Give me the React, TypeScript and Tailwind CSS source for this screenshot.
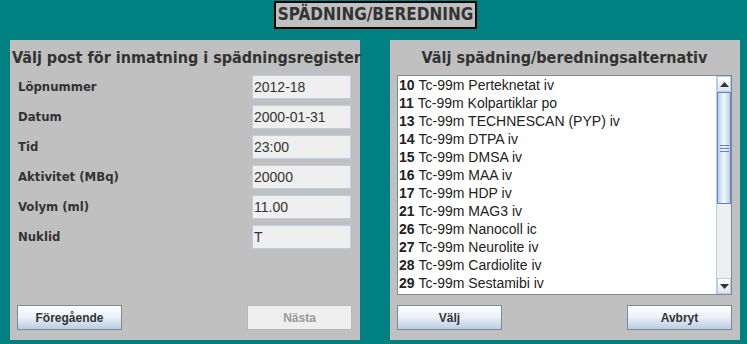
import React from "react";

const fields = [
  { label: "Löpnummer", value: "2012-18" },
  { label: "Datum", value: "2000-01-31" },
  { label: "Tid", value: "23:00" },
  { label: "Aktivitet (MBq)", value: "20000" },
  { label: "Volym (ml)", value: "11.00" },
  { label: "Nuklid", value: "T" },
];

const items = [
  ["10", "Tc-99m Perteknetat iv"],
  ["11", "Tc-99m Kolpartiklar po"],
  ["13", "Tc-99m TECHNESCAN (PYP) iv"],
  ["14", "Tc-99m DTPA iv"],
  ["15", "Tc-99m DMSA iv"],
  ["16", "Tc-99m MAA iv"],
  ["17", "Tc-99m HDP iv"],
  ["21", "Tc-99m MAG3 iv"],
  ["26", "Tc-99m Nanocoll ic"],
  ["27", "Tc-99m Neurolite iv"],
  ["28", "Tc-99m Cardiolite iv"],
  ["29", "Tc-99m Sestamibi iv"],
];

const boldFont = "font-['DejaVu_Sans_Condensed','DejaVu_Sans',Verdana,sans-serif] font-bold";
const plainFont = "font-['Liberation_Sans',Arial,sans-serif]";

const MetalButton = ({ children, disabled }: { children: React.ReactNode; disabled?: boolean }) => (
  <button
    disabled={disabled}
    className={`w-[105px] h-[25px] border text-[12px] font-bold ${plainFont} ${
      disabled
        ? "bg-[#eeeeee] border-[#b8b8b8] text-[#999999]"
        : "bg-gradient-to-b from-white via-[#e9f0f8] to-[#b9cde3] border-[#7a8a99] text-[#333333]"
    }`}
  >
    {children}
  </button>
);

const Arrow = ({ up }: { up?: boolean }) => (
  <div className="h-[16px] flex items-center justify-center bg-gradient-to-b from-white to-[#dde5ee] border border-[#b8cfe5]">
    <svg width="9" height="5" viewBox="0 0 9 5">
      <path d={up ? "M0 5 L4.5 0 L9 5 Z" : "M0 0 L4.5 5 L9 0 Z"} fill="#333" />
    </svg>
  </div>
);

export default function App() {
  return (
    <div className="w-[747px] h-[344px] bg-[#008080] flex flex-col text-[#333333]">
      <div className="flex justify-center pt-[1px] pl-[4px]">
        <div className={`h-[28px] px-[2px] flex items-center border-2 border-black bg-[#c0c0c0] text-[17px] ${boldFont}`}>
          SPÄDNING/BEREDNING
        </div>
      </div>

      <div className="flex gap-[30px] pl-[10px] mt-[11px]">
        {/* left panel */}
        <div className="w-[350px] h-[300px] bg-[#c0c0c0] flex flex-col px-[7px] pb-[10px]">
          <div className={`h-[35px] flex items-center text-[16px] -ml-[5px] whitespace-nowrap ${boldFont}`}>
            Välj post för inmatning i spädningsregister
          </div>
          <div className="flex flex-col gap-[6px]">
            {fields.map((f) => (
              <div key={f.label} className="flex items-center justify-between h-[24px] pr-[2px]">
                <span className={`pl-[1px] text-[13px] ${boldFont}`}>{f.label}</span>
                <div className={`w-[99px] h-[24px] bg-[#efefef] border border-[#b8cfe5] flex items-center px-[1px] text-[14px] ${plainFont}`}>
                  {f.value}
                </div>
              </div>
            ))}
          </div>
          <div className="mt-auto flex justify-between pr-[1px]">
            <MetalButton>Föregående</MetalButton>
            <MetalButton disabled>Nästa</MetalButton>
          </div>
        </div>

        {/* right panel */}
        <div className="w-[350px] h-[300px] bg-[#c0c0c0] flex flex-col px-[7px] pr-[8px] pb-[10px]">
          <div className={`h-[35px] flex items-center justify-center text-[16px] whitespace-nowrap ${boldFont}`}>
            Välj spädning/beredningsalternativ
          </div>
          <div className="h-[220px] bg-white border border-[#7a8a99] flex">
            <div className="flex-1 flex flex-col overflow-hidden text-[#222222]">
              {items.map(([n, t]) => (
                <div key={n} className={`h-[18px] flex items-center pl-[1px] text-[14px] whitespace-nowrap ${plainFont}`}>
                  <span className="font-bold">{n}</span>
                  <span className="ml-[4px]">{t}</span>
                </div>
              ))}
            </div>
            <div className="w-[15px] flex flex-col bg-[#eeeeee] border-l border-[#b8cfe5]">
              <Arrow up />
              <div className="h-[112px] bg-gradient-to-r from-[#b9cde8] via-[#f4f8fc] to-[#b9cde8] border border-[#6382bf] flex flex-col items-center justify-center gap-[2px]">
                <div className="w-[9px] h-[1px] bg-[#6382bf]" />
                <div className="w-[9px] h-[1px] bg-[#6382bf]" />
                <div className="w-[9px] h-[1px] bg-[#6382bf]" />
              </div>
              <div className="flex-1" />
              <Arrow />
            </div>
          </div>
          <div className="mt-auto flex justify-between">
            <MetalButton>Välj</MetalButton>
            <MetalButton>Avbryt</MetalButton>
          </div>
        </div>
      </div>
    </div>
  );
}
